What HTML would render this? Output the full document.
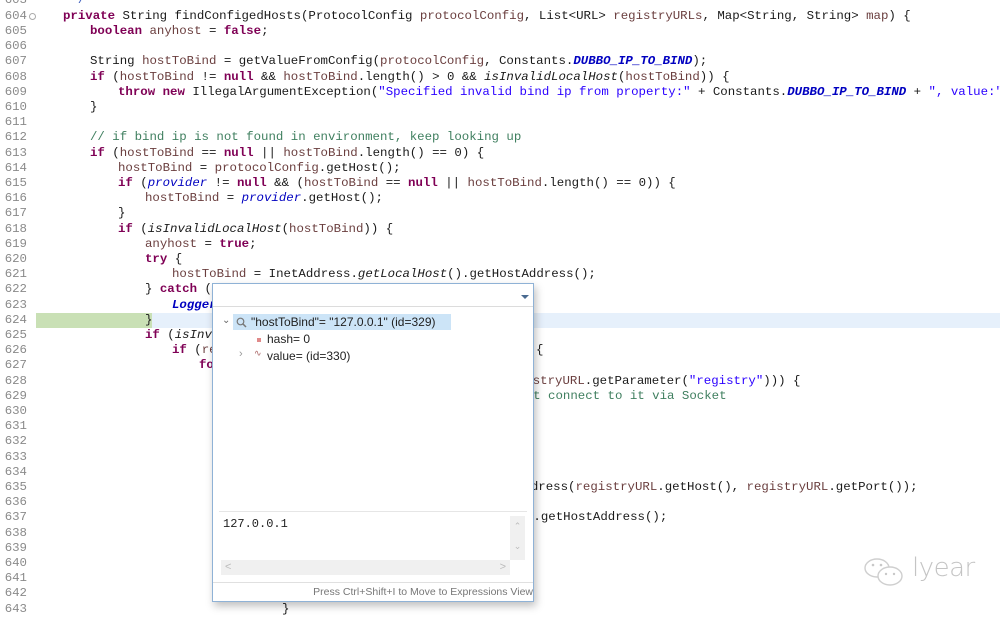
<!DOCTYPE html>
<html><head><meta charset="utf-8"><style>
body{margin:0;width:1000px;height:617px;overflow:hidden;background:#fff;position:relative;font-family:"Liberation Mono",monospace;}
#wrap{position:absolute;left:0;top:0;width:1000px;height:617px;overflow:hidden;}
.ln{position:absolute;left:0;width:27px;text-align:right;font-size:12.4px;color:#8a8a8a;line-height:15px;}
.c{position:absolute;font-size:12.4px;line-height:15px;white-space:pre;color:#1a1a1a;}
.k{color:#7f0055;font-weight:bold}
.s{color:#2a00ff}
.f{color:#0000c0;font-style:italic;font-weight:bold}
.fi{color:#0000c0;font-style:italic}
.v{color:#6a3e3e}
.cm{color:#3f7f5f}
.i{font-style:italic}
.jd{color:#3f5fbf}
#pop{position:absolute;left:212px;top:283px;width:320px;height:317px;border:1px solid #8fb2d6;background:#fff;box-shadow:2px 4px 8px rgba(0,0,0,.25);font-family:"Liberation Sans",sans-serif;font-size:12px;color:#222;}
</style></head><body><div id="wrap">
<div style="position:absolute;left:36px;top:313px;width:116px;height:15px;background:#c9e0b5"></div>
<div style="position:absolute;left:152px;top:313px;width:848px;height:15px;background:#e6f0fb"></div>

<div class="ln" style="top:-7px">603</div>
<div class="ln" style="top:9px">604</div><div style="position:absolute;left:29px;top:13px;width:5px;height:5px;border:1px solid #aaa;border-radius:50%"></div>
<div class="ln" style="top:24px">605</div>
<div class="ln" style="top:39px">606</div>
<div class="ln" style="top:54px">607</div>
<div class="ln" style="top:70px">608</div>
<div class="ln" style="top:85px">609</div>
<div class="ln" style="top:100px">610</div>
<div class="ln" style="top:115px">611</div>
<div class="ln" style="top:130px">612</div>
<div class="ln" style="top:146px">613</div>
<div class="ln" style="top:161px">614</div>
<div class="ln" style="top:176px">615</div>
<div class="ln" style="top:191px">616</div>
<div class="ln" style="top:206px">617</div>
<div class="ln" style="top:222px">618</div>
<div class="ln" style="top:237px">619</div>
<div class="ln" style="top:252px">620</div>
<div class="ln" style="top:267px">621</div>
<div class="ln" style="top:282px">622</div>
<div class="ln" style="top:298px">623</div>
<div class="ln" style="top:313px">624</div>
<div class="ln" style="top:328px">625</div>
<div class="ln" style="top:343px">626</div>
<div class="ln" style="top:358px">627</div>
<div class="ln" style="top:374px">628</div>
<div class="ln" style="top:389px">629</div>
<div class="ln" style="top:404px">630</div>
<div class="ln" style="top:419px">631</div>
<div class="ln" style="top:434px">632</div>
<div class="ln" style="top:450px">633</div>
<div class="ln" style="top:465px">634</div>
<div class="ln" style="top:480px">635</div>
<div class="ln" style="top:495px">636</div>
<div class="ln" style="top:510px">637</div>
<div class="ln" style="top:526px">638</div>
<div class="ln" style="top:541px">639</div>
<div class="ln" style="top:556px">640</div>
<div class="ln" style="top:571px">641</div>
<div class="ln" style="top:586px">642</div>
<div class="ln" style="top:602px">643</div>

<div class="c jd" style="top:-7px;left:63px"> */</div>
<div class="c" style="top:9px;left:63px"><span class="k">private</span> String findConfigedHosts(ProtocolConfig <span class="v">protocolConfig</span>, List&lt;URL&gt; <span class="v">registryURLs</span>, Map&lt;String, String&gt; <span class="v">map</span>) {</div>
<div class="c" style="top:24px;left:90px"><span class="k">boolean</span> <span class="v">anyhost</span> = <span class="k">false</span>;</div>
<div class="c" style="top:54px;left:90px">String <span class="v">hostToBind</span> = getValueFromConfig(<span class="v">protocolConfig</span>, Constants.<span class="f">DUBBO_IP_TO_BIND</span>);</div>
<div class="c" style="top:70px;left:90px"><span class="k">if</span> (<span class="v">hostToBind</span> != <span class="k">null</span> &amp;&amp; <span class="v">hostToBind</span>.length() &gt; 0 &amp;&amp; <span class="i">isInvalidLocalHost</span>(<span class="v">hostToBind</span>)) {</div>
<div class="c" style="top:85px;left:118px"><span class="k">throw</span> <span class="k">new</span> IllegalArgumentException(<span class="s">"Specified invalid bind ip from property:"</span> + Constants.<span class="f">DUBBO_IP_TO_BIND</span> + <span class="s">", value:"</span> + host</div>
<div class="c" style="top:100px;left:90px">}</div>
<div class="c cm" style="top:130px;left:90px">// if bind ip is not found in environment, keep looking up</div>
<div class="c" style="top:146px;left:90px"><span class="k">if</span> (<span class="v">hostToBind</span> == <span class="k">null</span> || <span class="v">hostToBind</span>.length() == 0) {</div>
<div class="c" style="top:161px;left:118px"><span class="v">hostToBind</span> = <span class="v">protocolConfig</span>.getHost();</div>
<div class="c" style="top:176px;left:118px"><span class="k">if</span> (<span class="fi">provider</span> != <span class="k">null</span> &amp;&amp; (<span class="v">hostToBind</span> == <span class="k">null</span> || <span class="v">hostToBind</span>.length() == 0)) {</div>
<div class="c" style="top:191px;left:145px"><span class="v">hostToBind</span> = <span class="fi">provider</span>.getHost();</div>
<div class="c" style="top:206px;left:118px">}</div>
<div class="c" style="top:222px;left:118px"><span class="k">if</span> (<span class="i">isInvalidLocalHost</span>(<span class="v">hostToBind</span>)) {</div>
<div class="c" style="top:237px;left:145px"><span class="v">anyhost</span> = <span class="k">true</span>;</div>
<div class="c" style="top:252px;left:145px"><span class="k">try</span> {</div>
<div class="c" style="top:267px;left:172px"><span class="v">hostToBind</span> = InetAddress.<span class="i">getLocalHost</span>().getHostAddress();</div>
<div class="c" style="top:282px;left:145px">} <span class="k">catch</span> (UnknownHostException <span class="v">e</span>) {</div>
<div class="c" style="top:298px;left:172px"><span class="f">Logger</span>.warn(e.getMessage(), e);</div>
<div class="c" style="top:313px;left:145px">}</div>
<div class="c" style="top:328px;left:145px"><span class="k">if</span> (<span class="i">isInvalidLocalHost</span>(<span class="v">hostToBind</span>)) {</div>
<div class="c" style="top:343px;left:172px"><span class="k">if</span> (<span class="v">registryURLs</span> != null) {</div>
<div class="c" style="top:343px;left:536px">{</div>
<div class="c" style="top:358px;left:199px"><span class="k">for</span> (URL registryURL : registryURLs) {</div>
<div class="c" style="top:374px;left:503px"><span class="v">registryURL</span>.getParameter(<span class="s">"registry"</span>))) {</div>
<div class="c cm" style="top:389px;left:496px">cannot connect to it via Socket</div>
<div class="c" style="top:480px;left:516px">Address(<span class="v">registryURL</span>.getHost(), <span class="v">registryURL</span>.getPort());</div>
<div class="c" style="top:510px;left:526px">).getHostAddress();</div>
<div class="c" style="top:586px;left:279px">}     }</div>
<div class="c" style="top:602px;left:282px">}</div>

<div id="pop">
 <div style="position:absolute;left:0;top:22px;width:320px;height:1px;background:#dcdcdc"></div>
 <div style="position:absolute;left:308px;top:11px;width:0;height:0;border-left:4px solid transparent;border-right:4px solid transparent;border-top:4px solid #4a6a90"></div>
 <div style="position:absolute;left:20px;top:30px;width:218px;height:16px;background:#cce4f7"></div>
 <div style="position:absolute;left:9px;top:31px;color:#666;font-size:10px">&#8964;</div>
 <svg style="position:absolute;left:23px;top:33px" width="11" height="11"><circle cx="4.5" cy="4.5" r="3.3" fill="none" stroke="#777" stroke-width="1.2"/><line x1="7" y1="7" x2="10" y2="10" stroke="#777" stroke-width="1.5"/></svg>
 <div style="position:absolute;left:38px;top:31px">"hostToBind"= "127.0.0.1" (id=329)</div>
 <div style="position:absolute;left:44px;top:54px;width:4px;height:4px;background:#e08a8a"></div>
 <div style="position:absolute;left:54px;top:48px">hash= 0</div>
 <div style="position:absolute;left:26px;top:64px;color:#999;font-size:11px">&#8250;</div>
 <div style="position:absolute;left:41px;top:64px;color:#a66;font-size:9px">&#8767;</div>
 <div style="position:absolute;left:54px;top:65px">value= (id=330)</div>
 <div style="position:absolute;left:6px;top:227px;width:308px;height:1px;background:#e6e6e6"></div>
 <div style="position:absolute;left:10px;top:233px;font-family:'Liberation Mono',monospace;font-size:12px;color:#222">127.0.0.1</div>
 <div style="position:absolute;left:297px;top:232px;width:15px;height:44px;background:#f0f0f0;color:#bbb;font-size:9px;text-align:center;line-height:20px">&#8963;<br>&#8964;</div>
 <div style="position:absolute;left:8px;top:276px;width:289px;height:15px;background:#f0f0f0;color:#bbb;font-size:11px;line-height:15px"><span style="margin-left:4px">&lt;</span><span style="float:right;margin-right:4px">&gt;</span></div>
 <div style="position:absolute;left:0;top:298px;width:320px;height:1px;background:#e0e0e0"></div>
 <div style="position:absolute;right:0;top:302px;font-size:10.5px;color:#777;white-space:nowrap">Press Ctrl+Shift+I to Move to Expressions View</div>
</div>

<svg style="position:absolute;left:862px;top:555px" width="48" height="36"><g fill="none" stroke="#cfcfcf" stroke-width="1.4"><ellipse cx="15" cy="13" rx="12" ry="9"/><ellipse cx="28" cy="21" rx="12" ry="9" fill="#fff"/></g><g fill="#c8c8c8"><circle cx="11" cy="10" r="1.3"/><circle cx="19" cy="10" r="1.3"/><circle cx="24" cy="19" r="1.2"/><circle cx="32" cy="19" r="1.2"/></g></svg>
<div style="position:absolute;left:912px;top:553px;font-family:'DejaVu Sans',sans-serif;font-weight:200;font-size:26px;color:#c4c4c4;letter-spacing:-0.5px">lyear</div>
</div></body></html>
